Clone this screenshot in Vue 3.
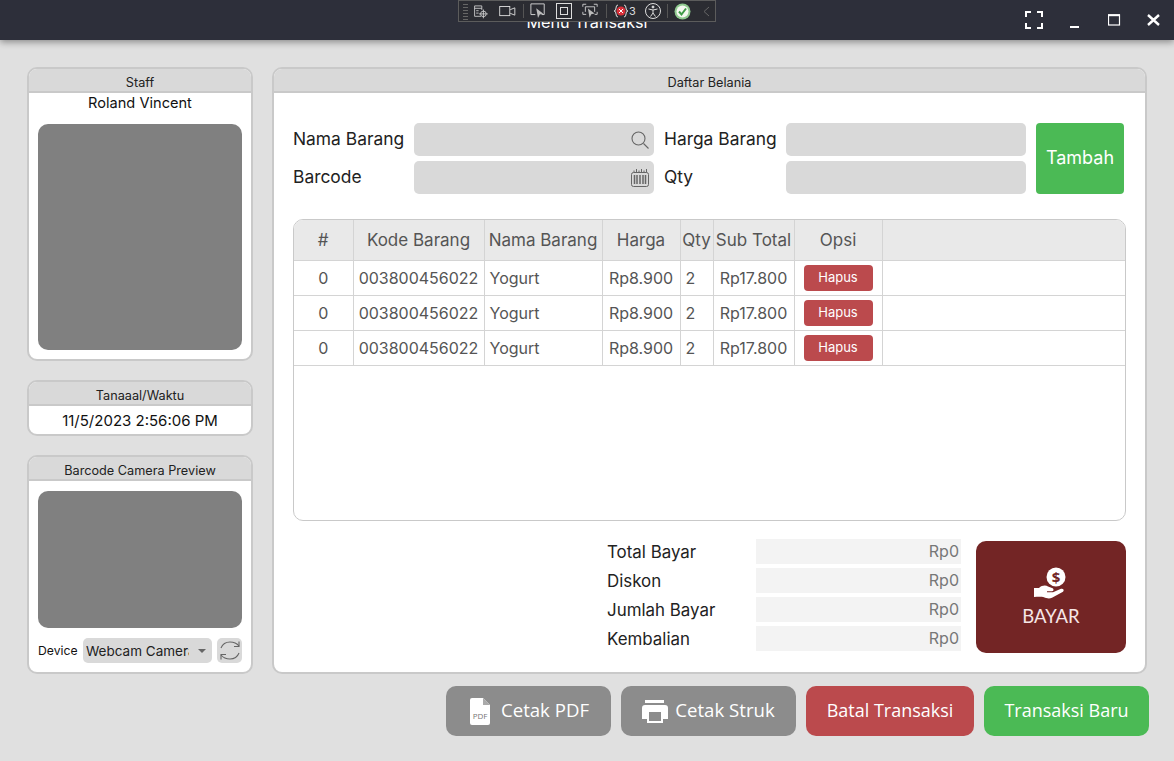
<template>
  <div class="window">
    <header class="titlebar">
      <span class="title">Menu Transaksi</span>
      <div class="win-btns">
        <svg width="18" height="18" viewBox="0 0 18 18" fill="none" stroke="#fff" stroke-width="2"><path d="M1 6V1h5M12 1h5v5M17 12v5h-5M6 17H1v-5" /></svg>
        <svg class="win-min" width="10" height="3" viewBox="0 0 10 3"><rect width="9" height="2" y="1" fill="#fff" /></svg>
        <svg class="win-max" width="13" height="12" viewBox="0 0 13 12" fill="none" stroke="#fff"><rect x=".5" y="1" width="11" height="10" stroke-width="1.2" /><path d="M0 1.2h12" stroke-width="2" /></svg>
        <svg class="win-close" width="13" height="12" viewBox="0 0 13 12" stroke="#fff" stroke-width="2.4"><path d="M1 1l11 10M12 1L1 11" /></svg>
      </div>
      <div class="devbar">
        <span class="grip"></span>
        <svg width="16" height="15" viewBox="0 0 20 18" fill="none" stroke="#ddd"><path d="M10 15H2V2h9v5M2 5h9M4 8h3M4 11h3" /><circle cx="13" cy="12" r="3.5" /><path d="M13 6.5v11M7.500 12h11" /></svg>
        <svg class="cam" width="17" height="11" viewBox="0 0 18 12" fill="none" stroke="#ddd"><rect x=".5" y=".5" width="11" height="10" /><path d="M12 4l5-2v8l-5-2" /></svg>
        <i class="sep sep-a"></i>
        <svg width="16" height="16" viewBox="0 0 18 18" fill="none" stroke="#ddd"><path d="M6 13H1V1h15v12h-3" /><path d="M7 6l8 6-4 1-2 4z" fill="#bbb" stroke="none" /></svg>
        <svg class="ml" width="16" height="16" viewBox="0 0 16 16" fill="none" stroke="#ddd"><rect x=".5" y=".5" width="15" height="15" /><rect x="4.500" y="4.500" width="7" height="7" /></svg>
        <svg class="ml" width="16" height="16" viewBox="0 0 19 18" fill="none" stroke="#ddd"><path d="M1 4V1h4M14 1h4v3M18 10v3h-3M5 13H1v-3M4 10V4h11v6" /><path d="M7 6l8 6-4 1-2 4z" fill="#bbb" stroke="none" /></svg>
        <i class="sep sep-b"></i>
        <svg width="16" height="16" viewBox="0 0 16 16"><path d="M5 2Q3 2 3 5T1 8q2 0 2 3t2 3M11 2q2 0 2 3t2 3q-2 0-2 3t-2 3" fill="none" stroke="#ddd" /><circle cx="8" cy="8" r="4.500" fill="#d8303a" /><path d="M6 6l4 4M10 6l-4 4" stroke="#fff" /></svg>
        <span class="count">3</span>
        <svg class="a11y" width="16" height="16" viewBox="0 0 16 16" fill="none" stroke="#ddd"><circle cx="8" cy="8" r="7.500" /><circle cx="8" cy="4" r="1" fill="#ddd" /><path d="M3.500 6L8 7l4.500-1M8 7v3l-2.500 3.500M8 10l2.500 3.500" /></svg>
        <i class="sep sep-c"></i>
        <svg width="17" height="17" viewBox="0 0 17 17"><circle cx="8.500" cy="8.500" r="8" fill="#8fc98f" /><circle cx="8.500" cy="8.500" r="6" fill="#f4f8f0" /><path d="M5 8.500l2.500 3 4.500-6" fill="none" stroke="#3d9a46" stroke-width="2" /></svg>
        <svg class="chev" width="7" height="11" viewBox="0 0 7 11" fill="none" stroke="#666"><path d="M6 1L1 5.500 6 10" /></svg>
      </div>
    </header>

    <main class="content">
      <aside class="side">
        <section class="card staff">
          <h3 class="card-head">Staff</h3>
          <div class="staff-body">
            <p class="staff-name">Roland Vincent</p>
            <div class="photo"></div>
          </div>
        </section>
        <section class="card">
          <h3 class="card-head">Tanaaal/Waktu</h3>
          <p class="clock">11/5/2023 2:56:06 PM</p>
        </section>
        <section class="card">
          <h3 class="card-head">Barcode Camera Preview</h3>
          <div class="cam-body">
            <div class="preview"></div>
            <div class="device-row">
              <span class="device-label">Device</span>
              <div class="device-select">
                <span class="device-name">Webcam Camera</span>
                <i class="caret"></i>
              </div>
              <button class="refresh">
                <svg width="22" height="21" viewBox="0 0 22 21" fill="none" stroke="#666" stroke-width="1.1">
                  <path d="M2 8C4 3 8 2 11 2c4 0 7 1.500 9 4" />
                  <path d="M20 1.500V6.500h-5" />
                  <path d="M20 13c-2 5-6 6-9 6-4 0-7-1.500-9-4" />
                  <path d="M2 19.500V14.500h5" />
                </svg>
              </button>
            </div>
          </div>
        </section>
      </aside>

      <section class="card main-panel">
        <h3 class="card-head">Daftar Belania</h3>
        <div class="panel-body">
          <div class="form">
            <label class="lbl">Nama Barang</label>
            <div class="field">
              <svg width="18" height="18" viewBox="0 0 18 18" fill="none" stroke="#666" stroke-width="1.100"><circle cx="7.500" cy="7.500" r="6.500" /><path d="M12.500 12.500L17.500 17.500" /></svg>
            </div>
            <label class="lbl">Harga Barang</label>
            <div class="field"></div>
            <button class="add">Tambah</button>
            <label class="lbl">Barcode</label>
            <div class="field">
              <svg width="18" height="18" viewBox="0 0 18 18" fill="none" stroke="#666"><rect x=".5" y="3.500" width="17" height="14" rx="2" /><path d="M3 1.500v2M5.500 0v3.500M8 1.500v2M10.500 0v3.500M13 1.500v2M15.500 0v3.500" /><path d="M3.500 6v9M6 6v9M9 6v9M12 6v9M14.500 6v9" stroke-width="1.500" /></svg>
            </div>
            <label class="lbl">Qty</label>
            <div class="field"></div>
          </div>

          <div class="table-wrap">
            <table class="items">
              <colgroup>
                <col v-for="w in colWidths" :key="w.id" :style="{ width: w.px + 'px' }" />
                <col />
              </colgroup>
              <thead>
                <tr>
                  <th v-for="h in headers" :key="h">{{ h }}</th>
                  <th></th>
                </tr>
              </thead>
              <tbody>
                <tr v-for="(r, i) in rows" :key="i">
                  <td class="center">{{ r.no }}</td>
                  <td class="center">{{ r.kode }}</td>
                  <td>{{ r.nama }}</td>
                  <td class="center">{{ r.harga }}</td>
                  <td>{{ r.qty }}</td>
                  <td class="center">{{ r.sub }}</td>
                  <td class="center"><button class="hapus">Hapus</button></td>
                  <td></td>
                </tr>
              </tbody>
            </table>
          </div>

          <div class="pay-area">
            <div class="totals">
              <template v-for="t in totals" :key="t">
                <span class="total-label">{{ t }}</span>
                <span class="total-value">Rp0</span>
              </template>
            </div>
            <button class="bayar">
              <svg width="36" height="34" viewBox="0 0 36 34">
                <circle cx="23" cy="10" r="9.500" fill="#fff" />
                <text x="23" y="15.500" text-anchor="middle" font-size="15" font-weight="700" font-family="Open Sans, sans-serif" fill="#732525">$</text>
                <path d="M1 21h5c3-3 7-3 9-1.500l4 1.500c2 .5 2 3 0 3.300h-5v1h6l8-3.500c2.500-.5 3.500 1.500 2 3l-11 6c-3 1.300-6 .3-8-.5-2-.7-5-.8-10-.3z" fill="#fff" />
              </svg>
              <span>BAYAR</span>
            </button>
          </div>
        </div>
      </section>
    </main>

    <footer class="actions">
      <button class="act gray">
        <svg width="20" height="27" viewBox="0 0 20 27"><path d="M2 0h11l7 7v18a2 2 0 0 1-2 2H2a2 2 0 0 1-2-2V2a2 2 0 0 1 2-2z" fill="#fff" /><path d="M13 0v7h7z" fill="#aaa" /><text x="10" y="21" text-anchor="middle" font-size="8" font-family="Open Sans, sans-serif" fill="#777">PDF</text></svg>
        <span>Cetak PDF</span>
      </button>
      <button class="act gray">
        <svg width="26" height="23" viewBox="0 0 26 23">
          <path d="M3 0h19v3H3zM3 5h20a3 3 0 0 1 3 3v11h-5V10H5v9H0V8a3 3 0 0 1 3-3z" fill="#fff" />
          <path d="M6 11h14v11H6z" fill="none" stroke="#fff" stroke-width="2" />
        </svg>
        <span>Cetak Struk</span>
      </button>
      <button class="act red"><span>Batal Transaksi</span></button>
      <button class="act green"><span>Transaksi Baru</span></button>
    </footer>
  </div>
</template>

<script setup>
const colWidths = [
  { id: "no", px: 59 },
  { id: "kode", px: 131 },
  { id: "nama", px: 118 },
  { id: "harga", px: 78 },
  { id: "qty", px: 33 },
  { id: "sub", px: 81 },
  { id: "opsi", px: 88 },
];
const headers = ["#", "Kode Barang", "Nama Barang", "Harga", "Qty", "Sub Total", "Opsi"];

const rows = [1, 2, 3].map(() => ({
  no: 0,
  kode: "003800456022",
  nama: "Yogurt",
  harga: "Rp8.900",
  qty: 2,
  sub: "Rp17.800",
}));

const totals = ["Total Bayar", "Diskon", "Jumlah Bayar", "Kembalian"];
</script>

<style>
body {
  background: #e0e0e0;
}
</style>

<style scoped>
.window {
  width: 1174px;
  height: 761px;
  overflow: hidden;
  background: #e0e0e0;
  font-family: "Inter", "Liberation Sans", sans-serif;
  color: #222;
}

.titlebar {
  position: relative;
  height: 40px;
  background: #2d2f3a;
  box-shadow: 0 2px 7px rgba(0, 0, 0, 0.4);
  display: flex;
  align-items: center;
  justify-content: center;
}
.title {
  color: #fff;
  font-size: 16.200px;
  padding-top: 3px;
}
.win-btns {
  position: absolute;
  right: 14px;
  top: 0;
  height: 40px;
  display: flex;
  align-items: center;
}
.win-min {
  margin: 12px 0 0 27px;
}
.win-max {
  margin-left: 28px;
}
.win-close {
  margin-left: 26px;
}

.devbar {
  position: absolute;
  left: 458px;
  top: 0;
  width: 258px;
  height: 22px;
  box-sizing: border-box;
  background: #2b2c32;
  border: 1px solid #5c5c5c;
  display: flex;
  align-items: center;
  padding-left: 14px;
}
.grip {
  position: absolute;
  left: 4px;
  top: 2px;
  width: 5px;
  height: 17px;
  background: repeating-linear-gradient(0deg, #666 0 1px, transparent 1px 3px);
}
.devbar .ml {
  margin-left: 10px;
}
.devbar .cam {
  margin-left: 10px;
}
.sep {
  width: 1px;
  height: 14px;
  background: #555;
}
.sep-a {
  margin: 0 6px 0 7px;
}
.sep-b {
  margin: 0 6px 0 8px;
}
.sep-c {
  margin: 0 6px;
}
.count {
  font-size: 11px;
  width: 7px;
  color: #ddd;
}
.a11y {
  margin-left: 9px;
}
.chev {
  margin-left: 12px;
}

.content {
  display: flex;
  gap: 19px;
  padding: 27px 0 0 27px;
}
.side {
  width: 226px;
  display: flex;
  flex-direction: column;
  gap: 19px;
}

.card {
  box-sizing: border-box;
  background: #fff;
  border: 2px solid #c9c9c9;
  border-radius: 10px;
  overflow: hidden;
}
.card-head {
  margin: 0;
  height: 24px;
  box-sizing: border-box;
  background: #d9d9d9;
  border-bottom: 2px solid #c9c9c9;
  font-size: 12.700px;
  font-weight: 400;
  line-height: 27px;
  text-align: center;
  color: #222;
}

.staff-body {
  padding: 0 9px 9px;
}
.staff-name {
  margin: 0;
  height: 20px;
  font-size: 14.600px;
  line-height: 20px;
  text-align: center;
  color: #111;
}
.photo {
  margin-top: 11px;
  height: 226px;
  background: #808080;
  border-radius: 10px;
}

.clock {
  margin: 0;
  height: 28px;
  line-height: 29px;
  font-size: 15px;
  text-align: center;
  color: #111;
}

.cam-body {
  padding: 10px 9px 9px;
}
.preview {
  height: 137px;
  background: #808080;
  border-radius: 10px;
}
.device-row {
  margin-top: 10px;
  display: flex;
  align-items: center;
  height: 25px;
}
.device-label {
  width: 45px;
  font-size: 12.200px;
  color: #111;
}
.device-select {
  width: 129px;
  height: 25px;
  box-sizing: border-box;
  padding-left: 3px;
  background: #d9d9d9;
  border-radius: 5px;
  display: flex;
  align-items: center;
  position: relative;
}
.device-name {
  width: 103px;
  overflow: hidden;
  white-space: nowrap;
  font-size: 13.500px;
  color: #222;
}
.caret {
  position: absolute;
  right: 6px;
  top: 11px;
  border: 4px solid transparent;
  border-top: 4px solid #666;
  border-bottom: none;
}
.refresh {
  margin-left: 5px;
  width: 25px;
  height: 25px;
  padding: 0;
  border: none;
  background: #d9d9d9;
  border-radius: 5px;
  display: flex;
  align-items: center;
  justify-content: center;
}

.main-panel {
  width: 875px;
  height: 607px;
}
.panel-body {
  padding: 30px 21px 0 19px;
}

.form {
  display: grid;
  grid-template-columns: 121px 240px 132px 240px 98px;
  grid-template-rows: 33px 33px;
  gap: 5px 0;
  align-items: center;
}
.lbl {
  font-size: 17.400px;
  line-height: 31px;
  height: 33px;
  color: #222;
  white-space: nowrap;
}
.field {
  height: 33px;
  background: #d9d9d9;
  border-radius: 5px;
  display: flex;
  align-items: center;
  justify-content: flex-end;
  padding-right: 5px;
  box-sizing: border-box;
}
.field + .lbl {
  padding-left: 10px;
}
.add {
  grid-row: 1 / 3;
  grid-column: 5;
  margin-left: 10px;
  height: 71px;
  width: 88px;
  border: none;
  border-radius: 4px;
  background: #4bba55;
  color: #fff;
  font-family: inherit;
  font-size: 18px;
  padding: 0 0 3px;
}

.table-wrap {
  margin-top: 25px;
  width: 833px;
  height: 302px;
  box-sizing: border-box;
  border: 1px solid #c9c9c9;
  border-radius: 10px;
  overflow: hidden;
}
.items {
  width: 100%;
  table-layout: fixed;
  border-collapse: collapse;
  color: #555;
}
.items th {
  height: 40px;
  padding: 0;
  box-sizing: border-box;
  background: #e9e9e9;
  border-right: 1px solid #d4d4d4;
  border-bottom: 1px solid #d4d4d4;
  font-size: 17px;
  font-weight: 400;
  white-space: nowrap;
  overflow: hidden;
}
.items th:last-child,
.items td:last-child {
  border-right: none;
}
.items td {
  height: 35px;
  padding: 0 0 0 5px;
  box-sizing: border-box;
  border-right: 1px solid #d4d4d4;
  border-bottom: 1px solid #d4d4d4;
  font-size: 16px;
  white-space: nowrap;
}
.items td.center {
  padding: 0;
  text-align: center;
}
.hapus {
  display: block;
  margin: 0 auto;
  width: 69px;
  height: 26px;
  padding: 0 0 2px;
  border: none;
  border-radius: 4px;
  background: #bb4a4d;
  color: #fff;
  font-family: inherit;
  font-size: 13px;
}

.pay-area {
  margin-top: 20px;
  display: flex;
  justify-content: flex-end;
  width: 833px;
}
.totals {
  width: 354px;
  display: grid;
  grid-template-columns: 149px 205px;
  grid-auto-rows: 25px;
  row-gap: 4px;
  margin-top: -2px;
  align-items: center;
}
.total-label {
  font-size: 16.900px;
  color: #222;
}
.total-value {
  height: 25px;
  line-height: 25px;
  background: #f3f3f3;
  text-align: right;
  padding-right: 2px;
  font-size: 16px;
  color: #777;
}
.bayar {
  margin-left: 15px;
  width: 150px;
  height: 112px;
  border: none;
  border-radius: 10px;
  background: #732525;
  color: #f5e6e6;
  font-family: "Lato", sans-serif;
  font-size: 18.500px;
  display: flex;
  flex-direction: column;
  align-items: center;
  justify-content: center;
  gap: 4px;
  padding: 0;
}

.actions {
  display: flex;
  gap: 10px;
  justify-content: flex-end;
  padding: 12px 25px 0 0;
}
.act {
  height: 50px;
  padding: 0;
  border: none;
  border-radius: 10px;
  color: #fff;
  font-family: "Open Sans", sans-serif;
  font-size: 18px;
  display: flex;
  align-items: center;
  justify-content: center;
  gap: 9px;
}
.act span {
  margin-top: -3px;
}
.act.gray {
  background: #8c8c8c;
  font-size: 18.600px;
}
.act.gray:nth-child(1) {
  width: 165px;
  gap: 11px;
  padding-left: 2px;
}
.act.gray:nth-child(2) {
  width: 175px;
  gap: 7px;
}
.act.red {
  width: 168px;
  background: #bb4a4d;
}
.act.green {
  width: 165px;
  background: #4bba55;
}
</style>
